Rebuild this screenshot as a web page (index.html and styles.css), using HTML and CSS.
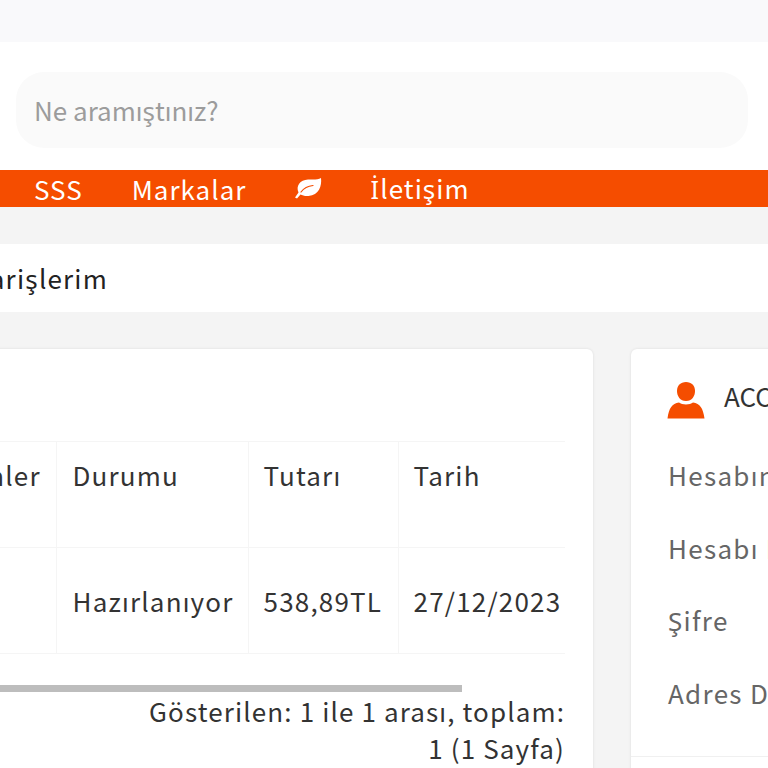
FILE: index.html
```html
<!DOCTYPE html>
<html lang="tr">
<head>
<meta charset="utf-8">
<title>Siparişlerim</title>
<link rel="stylesheet" href="styles.css">
</head>
<body>
<div class="page">
  <div class="topband"></div>
  <header class="header">
    <div class="search">Ne aramıştınız?</div>
  </header>
  <nav class="nav">
    <a class="nav-link">SSS</a>
    <a class="nav-link">Markalar</a>
    <svg class="leaf" viewBox="0 0 28 22" width="28" height="22" aria-hidden="true">
      <path fill="#fff" d="M27 1C28 9 25 18 14.500 19C11 19.300 8.500 18.500 6.500 17.500L3 21.500L1 20.500L4.500 15.500C1.500 9 6 3 14 2.500C19 2.200 24 3 27 1Z"/>
      <path fill="none" stroke="#f54d00" stroke-width="1.200" stroke-linecap="round" d="M7 15C10 11 14 9 19 8.500"/>
    </svg>
    <a class="nav-link"><span class="cap-i">İ</span>letişim</a>
  </nav>
  <div class="crumbs"><div class="crumb-clip"><span class="crumb">Siparişlerim</span></div></div>
  <main class="content">
    <section class="card orders">
      <table class="table">
        <colgroup>
          <col class="col-a"><col class="col-b"><col class="col-c"><col class="col-d">
        </colgroup>
        <thead>
          <tr><th>Ürünler</th><th>Durumu</th><th>Tutarı</th><th>Tarih</th></tr>
        </thead>
        <tbody>
          <tr><td></td><td>Hazırlanıyor</td><td>538,89TL</td><td>27/12/2023</td></tr>
        </tbody>
      </table>
      <div class="scrollbar"></div>
      <p class="summary">Gösterilen: 1 ile 1 arası, toplam:<br>1 (1 Sayfa)</p>
    </section>
    <aside class="card account">
      <div class="account-head">
        <svg class="user" viewBox="0 0 38 38" width="38" height="38" aria-hidden="true">
          <path fill="#f54d00" d="M19 1C24.500 1 28 4.500 28 10C28 15 25 20 19 20C13 20 10 15 10 10C10 4.500 13.500 1 19 1Z"/>
          <path fill="#f54d00" d="M12 21.500C15 24 23 24 26 21.500C33 22.500 36 27 37.500 37.500H0.500C2 27 5 22.500 12 21.500Z"/>
        </svg>
        <span class="account-title">ACCOUNT</span>
      </div>
      <ul class="menu">
        <li>Hesabım</li>
        <li>Hesabı Düzenle</li>
        <li>Şifre</li>
        <li>Adres Defteri</li>
      </ul>
      <div class="rule"></div>
    </aside>
  </main>
</div>
</body>
</html>
```

FILE: styles.css
```css
* { box-sizing: border-box; }
html, body { margin: 0; padding: 0; }
body {
  background: #f4f4f4;
  font-family: "Noto Sans CJK JP", "Source Sans Pro", "Noto Sans", sans-serif;
  color: #333;
}
.page { width: 768px; height: 768px; overflow: hidden; }
.topband { height: 42px; background: #f9f9fb; }
.header { height: 128px; background: #fff; padding: 30px 20px 22px 16px; }
.search {
  height: 76px;
  border-radius: 28px;
  background: #fafafa;
  padding-left: 18px;
  display: flex;
  align-items: center;
  font-size: 26px;
  color: #9c9c9c;
}
.nav {
  height: 37px;
  background: #f54d00;
  display: flex;
  align-items: center;
  padding-left: 34px;
  gap: 49px;
  color: #fff;
  font-size: 26px;
  letter-spacing: 1px;
}
.nav-link { line-height: 37px; }
.cap-i { font-family: "Noto Sans", sans-serif; font-size: 25px; letter-spacing: 1.5px; }
.leaf { display: block; margin: -2px -1px 0 -1px; }
.crumbs {
  margin-top: 37px;
  height: 68px;
  background: #fff;
  font-size: 26px;
  letter-spacing: 1.2px;
  color: #222;
}
.crumb-clip {
  width: 108px;
  height: 68px;
  display: flex;
  align-items: center;
  justify-content: flex-end;
}
.crumb { white-space: nowrap; flex: none; }
.content {
  display: flex;
  align-items: flex-start;
  gap: 38px;
  margin-top: 37px;
  margin-left: -90px;
}
.card {
  background: #fff;
  border-radius: 6px;
  box-shadow: 0 0 3px rgba(0, 0, 0, 0.1);
  flex: none;
  height: 500px;
}
.orders { width: 683px; padding: 92px 28px 0 28px; }
.table {
  width: 627px;
  border-collapse: collapse;
  table-layout: fixed;
  font-size: 26px;
  letter-spacing: 1.2px;
  color: #333;
}
.col-a { width: 118px; }
.col-b { width: 192px; }
.col-c { width: 150px; }
.col-d { width: 167px; }
.table th, .table td {
  height: 106px;
  padding: 14px 0 0 16px;
  border: 1px solid #f5f5f5;
  font-weight: 400;
  text-align: left;
  vertical-align: top;
  white-space: nowrap;
}
.table td { padding-top: 34px; }
.table tr > :nth-child(n+3) { padding-left: 15px; }
.table tr > :first-child { border-left: 0; padding-left: 2px; }
.table tr > :last-child { border-right: 0; }
.scrollbar { width: 524px; height: 7px; margin-top: 31px; background: #bdbdbd; }
.summary {
  margin: 0;
  width: 627px;
  text-align: right;
  font-size: 26px;
  line-height: 37px;
  letter-spacing: 1.13px;
  color: #333;
}
.account { width: 300px; padding: 32px 0 0 37px; }
.account-head { display: flex; align-items: center; gap: 19px; height: 38px; margin-left: -1px; }
.account-title { font-size: 26px; color: #333; white-space: nowrap; margin-top: -9px; }
.user { display: block; flex: none; }
.menu {
  list-style: none;
  margin: 20px 0 0;
  padding: 0;
  font-size: 26px;
  letter-spacing: 1.3px;
  color: #666;
}
.menu li { height: 72.7px; line-height: 72.7px; white-space: nowrap; }
.rule { height: 1px; margin: 26px 0 0 -37px; background: #f0f0f0; }
```
